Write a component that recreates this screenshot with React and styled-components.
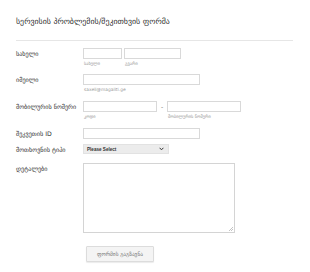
import React from 'react'
import styled, { createGlobalStyle } from 'styled-components'

const Global = createGlobalStyle`
  body {
    margin: 0;
    background: #fff;
    font-family: "DejaVu Sans", "Noto Sans", sans-serif;
  }
`

const Page = styled.div`
  width: 310px;
  height: 272px;
  padding: 16px 17px 0 16px;
  box-sizing: border-box;
`

const Title = styled.h1`
  margin: 0;
  font-size: 7.9px;
  font-weight: normal;
  color: #2f2f2f;
  line-height: 12px;
  padding-bottom: 12px;
  border-bottom: 1px solid #e6e6e6;
`

const Form = styled.div`
  padding-top: 7px;
  display: flex;
  flex-direction: column;
`

const Row = styled.div`
  display: grid;
  grid-template-columns: 67px 1fr;
  margin-bottom: ${p => p.gap || 6}px;
`

const Label = styled.div`
  font-size: 6.2px;
  color: #333;
  line-height: 11px;
  white-space: nowrap;
`

const Fields = styled.div`
  display: flex;
  align-items: flex-start;
  gap: ${p => p.gap || 2}px;
`

const Field = styled.div`
  display: flex;
  flex-direction: column;
`

const Input = styled.div`
  width: ${p => p.w}px;
  height: 11px;
  box-sizing: border-box;
  border: 1px solid #d9d9d9;
  background: #fff;
`

const Sub = styled.div`
  font-size: 4.4px;
  color: #999;
  line-height: 9px;
  padding-left: 1px;
`

const Dash = styled.div`
  font-size: 6px;
  color: #666;
  line-height: 11px;
  width: 6px;
  text-align: center;
`

const Select = styled.div`
  width: 86px;
  height: 10px;
  box-sizing: border-box;
  background: #ececec;
  border: 1px solid #e2e2e2;
  display: flex;
  align-items: center;
  justify-content: space-between;
  padding: 0 4px 0 3px;
  font-family: "Liberation Sans", Arial, sans-serif;
  font-size: 4.6px;
  font-weight: bold;
  color: #333;
`

const Textarea = styled.div`
  position: relative;
  width: 152px;
  height: 70px;
  box-sizing: border-box;
  border: 1px solid #d4d4d4;
  background: #fff;
`

const Grip = styled.svg`
  position: absolute;
  right: 1px;
  bottom: 1px;
`

const Button = styled.button`
  margin: 7px 0 0 70px;
  width: 68px;
  height: 16px;
  box-sizing: border-box;
  background: #f4f4f4;
  border: 1px solid #dcdcdc;
  border-radius: 1px;
  box-shadow: 0 1px 1px rgba(0, 0, 0, 0.08);
  font-family: "DejaVu Sans", sans-serif;
  font-size: 5.4px;
  color: #777;
  padding: 0;
`

export default function App() {
  return (
    <Page>
      <Global />
      <Title>სერვისის პრობლემის/შეკითხვის ფორმა</Title>
      <Form>
        <Row gap={6}>
          <Label>სახელი</Label>
          <Fields gap={2}>
            <Field>
              <Input w={39} />
              <Sub>სახელი</Sub>
            </Field>
            <Field>
              <Input w={57} />
              <Sub>გვარი</Sub>
            </Field>
          </Fields>
        </Row>
        <Row gap={7}>
          <Label>იმეილი</Label>
          <Field>
            <Input w={117} />
            <Sub>saxeli@magaliti.ge</Sub>
          </Field>
        </Row>
        <Row gap={7}>
          <Label>მობილურის ნომერი</Label>
          <Fields gap={0}>
            <Field>
              <Input w={74} />
              <Sub>კოდი</Sub>
            </Field>
            <Dash>-</Dash>
            <Field>
              <Input w={74} />
              <Sub>მობილურის ნომერი</Sub>
            </Field>
          </Fields>
        </Row>
        <Row gap={5}>
          <Label>შეკვეთის ID</Label>
          <Input w={117} />
        </Row>
        <Row gap={8}>
          <Label>მოთხოვნის ტიპი</Label>
          <Select>
            <span>Please Select</span>
            <svg width="5" height="4" viewBox="0 0 5 4">
              <path d="M0.6 0.8 L2.5 2.8 L4.4 0.8" stroke="#333" strokeWidth="1" fill="none" />
            </svg>
          </Select>
        </Row>
        <Row gap={0}>
          <Label>დეტალები</Label>
          <Textarea>
            <Grip width="5" height="5" viewBox="0 0 5 5">
              <path d="M1 5 L5 1 M3 5 L5 3" stroke="#aaa" strokeWidth="0.7" />
            </Grip>
          </Textarea>
        </Row>
        <Button>ფორმის გაგზავნა</Button>
      </Form>
    </Page>
  )
}
